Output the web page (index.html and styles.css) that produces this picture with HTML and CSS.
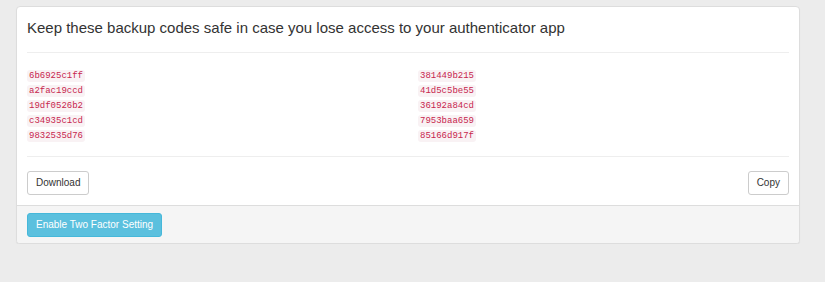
FILE: index.html
```html
<!DOCTYPE html>
<html>
  <head>
    <title>Backup Codes</title>
    <link rel="stylesheet" href="styles.css">
  </head>
  <body>
    <div class="panel">
      <div class="panel-body">
        <h3 class="panel-title">Keep these backup codes safe in case you lose access to your authenticator app</h3>
        <hr>
        <div class="codes">
          <div class="code-col">
            <code>6b6925c1ff</code>
            <code>a2fac19ccd</code>
            <code>19df0526b2</code>
            <code>c34935c1cd</code>
            <code>9832535d76</code>
          </div>
          <div class="code-col">
            <code>381449b215</code>
            <code>41d5c5be55</code>
            <code>36192a84cd</code>
            <code>7953baa659</code>
            <code>85166d917f</code>
          </div>
        </div>
        <hr>
        <div class="actions">
          <button class="btn">Download</button>
          <button class="btn">Copy</button>
        </div>
      </div>
      <div class="panel-footer">
        <button class="btn btn-info">Enable Two Factor Setting</button>
      </div>
    </div>
  </body>
</html>
```

FILE: styles.css
```css
body {
  margin: 0;
  padding: 6px 25px 0 16px;
  background-color: #ececec;
  font-family: "Liberation Sans", Arial, sans-serif;
  font-size: 12px;
  color: #333;
}

.panel {
  background-color: #fff;
  border: 1px solid #ddd;
  border-radius: 4px;
  box-shadow: 0 1px 1px rgba(0, 0, 0, 0.05);
}

.panel-body {
  padding: 10px;
}

.panel-title {
  margin: 0;
  font-size: 15px;
  font-weight: normal;
  line-height: 22px;
  color: #333;
}

hr {
  margin: 13px 0 0;
  border: 0;
  border-top: 1px solid #eee;
}

.codes + hr {
  margin-top: 14px;
}

.codes {
  display: grid;
  grid-template-columns: 391px 1fr;
  padding-top: 17px;
}

.code-col {
  display: flex;
  flex-direction: column;
  align-items: flex-start;
  gap: 3px;
}

code {
  font-family: "Liberation Mono", "Courier New", monospace;
  font-size: 9px;
  line-height: 10px;
  padding: 1px 2px;
  color: #c7254e;
  background-color: #f9f2f4;
  border-radius: 3px;
}

.actions {
  display: flex;
  justify-content: space-between;
  padding-top: 14px;
}

.btn {
  font-family: "Liberation Sans", Arial, sans-serif;
  font-size: 10px;
  line-height: 14px;
  padding: 4px 8px;
  color: #333;
  background-color: #fff;
  border: 1px solid #ccc;
  border-radius: 3px;
  cursor: pointer;
}

.panel-footer {
  padding: 7px 10px 6px;
  background-color: #f5f5f5;
  border-top: 1px solid #ddd;
  border-bottom-left-radius: 3px;
  border-bottom-right-radius: 3px;
}

.btn-info {
  color: #fff;
  background-color: #5bc0de;
  border-color: #46b8da;
}
```
